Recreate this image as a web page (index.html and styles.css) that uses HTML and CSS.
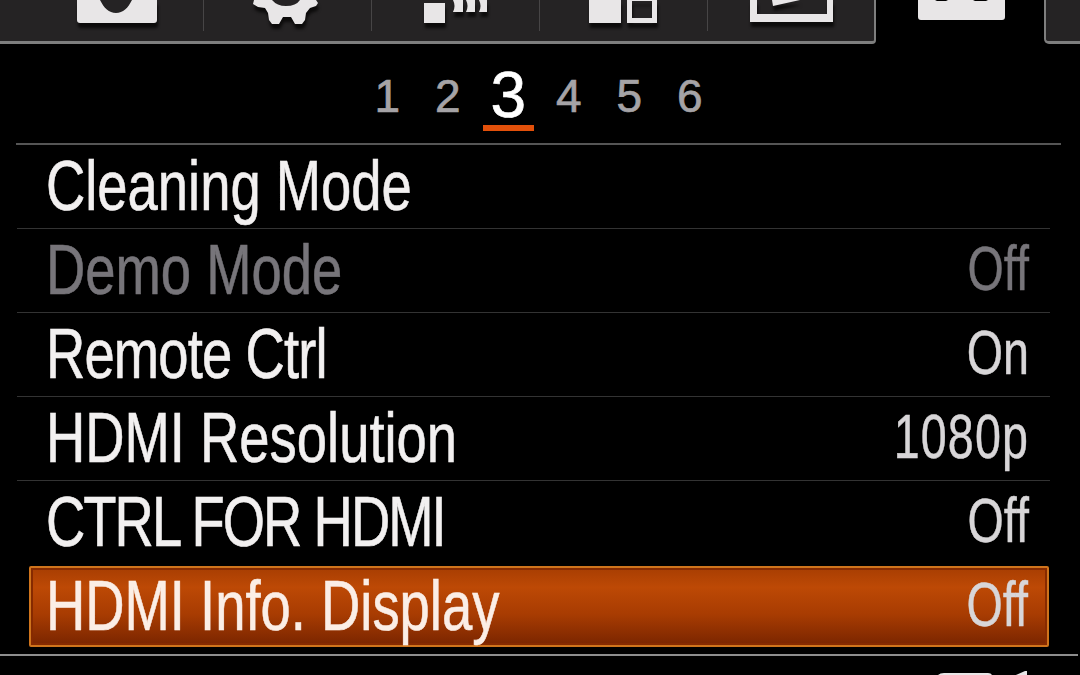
FILE: index.html
```html
<!DOCTYPE html>
<html lang="en">
<head>
<meta charset="utf-8"/>
<title>Camera Menu</title>
<link rel="stylesheet" href="styles.css">
</head>
<body>
<div class="tabs">
  <div class="tab tab-first">
    <svg class="icon" width="204" height="41" viewBox="0 0 204 41">
      <path class="light" d="M77 0H157V20a3 3 0 0 1-3 3H80a3 3 0 0 1-3-3ZM100 0C104 8 109 13 116 13C123 13 128 8 132 0Z" fill-rule="evenodd"/>
    </svg>
  </div>
  <div class="tab">
    <svg class="icon" width="168" height="41" viewBox="204 0 168 41">
      <path class="light" d="M254 0L253 4L258 7L265 8L268 13L269 20L272 24H279L283 17H291L295 24H302L305 20L306 13L310 8L316 6L318 3L316 0H300Q296 6 286 6Q277 6 272 0Z"/>
    </svg>
  </div>
  <div class="tab">
    <svg class="icon" width="168" height="41" viewBox="372 0 168 41">
      <rect class="light" x="424" y="3" width="21" height="20"/>
      <path class="light" d="M453 0H463V12H453Q456 6 453 0ZM466 0H475V12H466Q469 6 466 0ZM479 0H487V12H479Q482 6 479 0Z"/>
    </svg>
  </div>
  <div class="tab">
    <svg class="icon" width="168" height="41" viewBox="540 0 168 41">
      <rect class="light" x="589" y="0" width="32" height="23"/>
      <path class="light" d="M627 0H657V23H627ZM632 1V18H652V1Z" fill-rule="evenodd"/>
    </svg>
  </div>
  <div class="tab tab-last">
    <svg class="icon" width="168" height="41" viewBox="708 0 168 41">
      <path class="light" d="M750 0H833V22H750ZM757 0V14H827V0Z" fill-rule="evenodd"/>
      <path class="light" d="M773 6L800 0H772Z"/>
    </svg>
  </div>
  <div class="tab-active">
    <svg class="icon-flat" width="168" height="41" viewBox="876 0 168 41">
      <path class="light" d="M918 0H1005V17a3 3 0 0 1-3 3H921a3 3 0 0 1-3-3ZM935 0L937 1H946L948 0ZM973 0L975 1H986L988 0Z" fill-rule="evenodd"/>
    </svg>
  </div>
  <div class="tab-next"></div>
</div>

<div class="pager">
  <span class="page">1</span>
  <span class="page">2</span>
  <span class="page page-current">3</span>
  <span class="page">4</span>
  <span class="page">5</span>
  <span class="page">6</span>
</div>

<div class="menu">
  <div class="row"><span class="label">Cleaning Mode</span></div>
  <div class="row row-off"><span class="label">Demo Mode</span><span class="value">Off</span></div>
  <div class="row"><span class="label label-snug">Remote Ctrl</span><span class="value">On</span></div>
  <div class="row"><span class="label">HDMI Resolution</span><span class="value value-wide">1080p</span></div>
  <div class="row row-plain"><span class="label label-caps">CTRL FOR HDMI</span><span class="value">Off</span></div>
  <div class="row row-selected"><span class="label">HDMI Info. Display</span><span class="value">Off</span></div>
</div>

<div class="status">
  <svg class="status-icons" width="100" height="19" viewBox="930 656 100 19">
    <path class="light" d="M938 675Q940 673 944 673H988Q991 673 992 675Z"/>
    <path class="light" d="M1016 675L1025 671H1027V675Z"/>
  </svg>
</div>
</body>
</html>
```

FILE: styles.css
```css
body {
    margin: 0;
    width: 1080px;
    height: 675px;
    overflow: hidden;
    background: #000;
    color: #f2f0f0;
    font-family: "Liberation Sans", Arial, sans-serif;
}

.tabs {
    display: flex;
    height: 44px;
}

.tab {
    width: 168px;
    height: 41px;
    background: #252324;
    border-bottom: 3px solid #7e7e7e;
    position: relative;
}

.tab::after {
    content: '';
    position: absolute;
    top: 0;
    right: 0;
    width: 1px;
    height: 31px;
    background: #474546;
}

.tab-first {
    width: 204px;
}

.tab-last {
    box-sizing: border-box;
    height: 44px;
    border-right: 2px solid #7e7e7e;
    border-bottom-right-radius: 4px;
}

.tab-last::after {
    display: none;
}

.tab-active {
    width: 168px;
    height: 44px;
}

.tab-next {
    width: 34px;
    height: 41px;
    background: #252324;
    border-left: 2px solid #7e7e7e;
    border-bottom: 3px solid #7e7e7e;
    border-bottom-left-radius: 5px;
}

.icon {
    display: block;
    filter: drop-shadow(1px 5px 1.5px #0c0b0b);
}

.icon-flat {
    display: block;
}

.light {
    fill: #e8e6e7;
}

.pager {
    display: flex;
    justify-content: center;
    align-items: center;
    box-sizing: border-box;
    width: 1045px;
    height: 101px;
    margin-left: 16px;
    padding-top: 4px;
    border-bottom: 2px solid #555;
}

.page {
    width: 60.5px;
    text-align: center;
    font-size: 46px;
    line-height: 60px;
    color: #a5a3a6;
    -webkit-text-stroke: 0.7px #a5a3a6;
}

.page-current {
    font-size: 64px;
    color: #fff;
    -webkit-text-stroke: 0.7px #fff;
    position: relative;
    top: -1px;
}

.page-current::after {
    content: '';
    position: absolute;
    left: 5px;
    right: 5px;
    bottom: -6px;
    height: 6px;
    background: #e2500a;
}

.menu {
    display: flex;
    flex-direction: column;
    padding: 0 30px 0 17px;
}

.row {
    display: flex;
    justify-content: space-between;
    align-items: center;
    height: 83px;
    padding: 0 21px 0 29px;
    border-bottom: 1px solid #333;
    white-space: nowrap;
}

.row-plain {
    border-bottom: none;
    height: 84px;
}

.label {
    display: inline-block;
    font-size: 70px;
    line-height: 80px;
    -webkit-text-stroke: 0.6px currentColor;
    transform: translateY(-1px) scaleX(0.777);
    transform-origin: left center;
}

.label-snug {
    letter-spacing: -1.1px;
}

.label-caps {
    letter-spacing: -2.5px;
}

.value {
    display: inline-block;
    font-size: 63px;
    line-height: 80px;
    color: #d8d6d8;
    -webkit-text-stroke: 0.5px currentColor;
    transform: translateY(-3px) scaleX(0.74);
    transform-origin: right center;
}

.value-wide {
    letter-spacing: 1.6px;
}

.row-off .label,
.row-off .value {
    color: #77757a;
}

.row-selected {
    box-sizing: border-box;
    height: 81px;
    margin: 1px 1px 0 12px;
    padding: 0 19px 0 15px;
    border: 2px solid #cf741c;
    border-radius: 2px;
    box-shadow: inset 0 0 0 2px #862a00;
    background: linear-gradient(#a83e02, #bd4905 25%, #a83c02 60%, #7a2500);
    color: #fbeee6;
}

.status {
    box-sizing: border-box;
    display: flex;
    justify-content: flex-end;
    width: 1078px;
    margin-top: 7px;
    padding-right: 48px;
    border-top: 2px solid #8e8e8e;
}

.status-icons {
    display: block;
}
```
